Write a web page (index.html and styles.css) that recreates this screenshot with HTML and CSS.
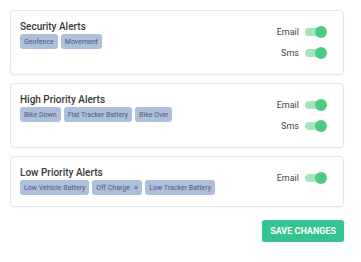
FILE: index.html
```html
<!DOCTYPE html>
<html lang="en">
<head>
    <meta charset="UTF-8">
    <meta name="viewport" content="width=device-width, initial-scale=1.0">
    <title>Alert Settings</title>
    <link rel="stylesheet" href="styles.css">
</head>
<body>
    <div class="page">
        <div class="cards">
            <!-- Security -->
            <div class="card">
                <div class="card-left">
                    <h3 class="card-title">Security Alerts</h3>
                    <div class="chips">
                        <span class="chip">Geofence</span>
                        <span class="chip">Movement</span>
                    </div>
                </div>
                <div class="channels">
                    <label class="channel">Email <span class="switch"><span class="knob"></span></span></label>
                    <label class="channel">Sms <span class="switch"><span class="knob"></span></span></label>
                </div>
            </div>

            <!-- High priority -->
            <div class="card">
                <div class="card-left">
                    <h3 class="card-title">High Priority Alerts</h3>
                    <div class="chips">
                        <span class="chip">Bike Down</span>
                        <span class="chip">Flat Tracker Battery</span>
                        <span class="chip">Bike Over</span>
                    </div>
                </div>
                <div class="channels">
                    <label class="channel">Email <span class="switch"><span class="knob"></span></span></label>
                    <label class="channel">Sms <span class="switch"><span class="knob"></span></span></label>
                </div>
            </div>

            <!-- Low priority -->
            <div class="card">
                <div class="card-left">
                    <h3 class="card-title">Low Priority Alerts</h3>
                    <div class="chips">
                        <span class="chip">Low Vehicle Battery</span>
                        <span class="chip">Off Charge <span class="chip-x">×</span></span>
                        <span class="chip">Low Tracker Battery</span>
                    </div>
                </div>
                <div class="channels">
                    <label class="channel">Email <span class="switch"><span class="knob"></span></span></label>
                </div>
            </div>
        </div>

        <div class="actions">
            <button class="btn-save">Save Changes</button>
        </div>
    </div>
</body>
</html>
```

FILE: styles.css
```css
* {
    margin: 0;
    padding: 0;
    box-sizing: border-box;
}

body {
    font-family: Roboto, "Liberation Sans", sans-serif;
    background: #fff;
    color: #333;
}

.page {
    padding: 10px 17px 0 10px;
}

.cards {
    display: flex;
    flex-direction: column;
    gap: 8px;
}

.card {
    display: flex;
    justify-content: space-between;
    border: 1px solid #e4e6e8;
    border-radius: 4px;
    box-shadow: 0 1px 2px rgba(0, 0, 0, 0.04);
    padding: 8px 16px 11px 9px;
}

.card-title {
    font-size: 10px;
    font-weight: 500;
    line-height: 15px;
    color: #3a3a3a;
}

.chips {
    display: flex;
    gap: 3px;
}

.chip {
    display: inline-flex;
    align-items: center;
    height: 15px;
    padding: 0 4px;
    border-radius: 3px;
    background: #adbfdb;
    color: #4d5b74;
    font-size: 7px;
}

.chip-x {
    margin-left: 4px;
    font-size: 8px;
    color: #555f72;
}

.channels {
    display: flex;
    flex-direction: column;
    padding-top: 2px;
}

.channel {
    display: flex;
    align-items: center;
    justify-content: flex-end;
    gap: 6px;
    height: 21px;
    font-size: 9px;
    color: #444;
}

.switch {
    position: relative;
    width: 22px;
    height: 12px;
}

.switch::before {
    content: "";
    position: absolute;
    left: 0;
    top: 2px;
    width: 20px;
    height: 8px;
    border-radius: 4px;
    background: #a6e3bf;
}

.knob {
    position: absolute;
    right: 0;
    top: 0;
    width: 12px;
    height: 12px;
    border-radius: 50%;
    background: #4ccb83;
}

.actions {
    display: flex;
    justify-content: flex-end;
    margin-top: 13px;
}

.btn-save {
    height: 22px;
    padding: 0 8px;
    border: none;
    border-radius: 3px;
    background: #33c491;
    color: #fff;
    font-family: Roboto, "Liberation Sans", sans-serif;
    font-size: 9px;
    font-weight: 700;
    text-transform: uppercase;
    box-shadow: 0 1px 2px rgba(0, 0, 0, 0.15);
}
```
